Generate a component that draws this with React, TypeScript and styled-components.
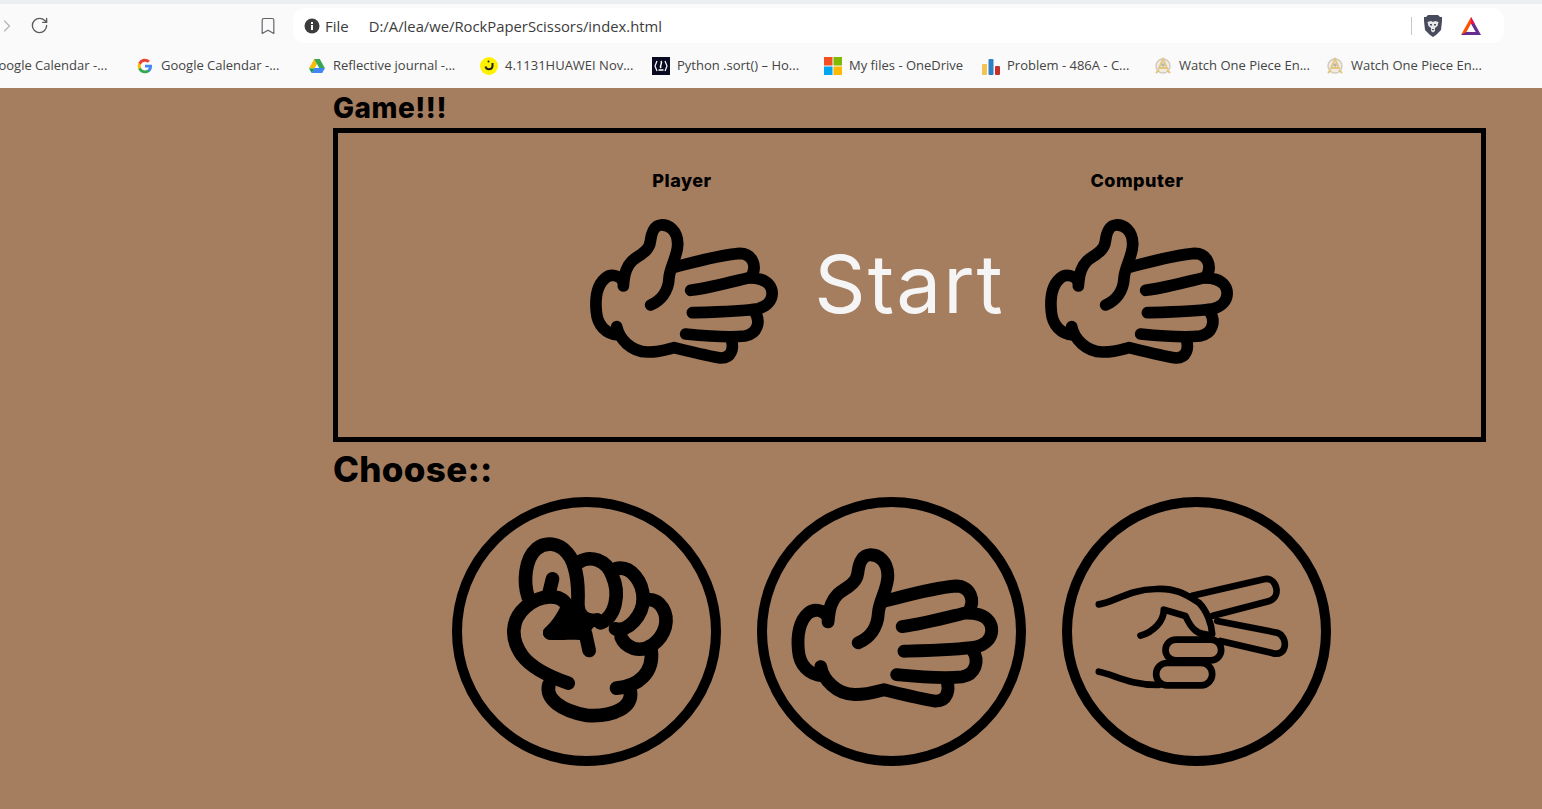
import styled, { createGlobalStyle } from 'styled-components'
import { Bookmark, ChevronRight, RotateCw } from 'lucide-react'

const GlobalStyle = createGlobalStyle`
  html, body {
    margin: 0;
    height: 100%;
    background: #a57d5f;
    overflow: hidden;
  }
`

function PaperHand() {
  return (
    <g fill="none" stroke="#000" strokeWidth="35" strokeLinecap="round" strokeLinejoin="round">
      <path d="M215 285C245 272 268 245 270 205C272 170 298 135 296 100C295 62 270 43 245 45C225 47 217 70 214 95C210 125 180 135 160 152C145 167 136 185 133 228" />
      <path d="M133 215C122 195 95 190 78 205C55 225 48 265 52 305C55 345 80 372 118 375" />
      <path d="M113 350C120 385 155 425 205 426C240 427 265 418 285 413C330 424 385 438 425 444C458 445 465 415 457 388" />
      <path d="M320 372C380 378 445 384 498 378C535 372 547 335 527 305" />
      <path d="M340 308C410 306 490 304 538 296C592 282 592 222 545 208C535 205 525 204 512 204" />
      <path d="M335 241C400 232 460 215 514 202C538 170 520 130 482 130C420 135 350 155 288 171" />
    </g>
  )
}

function RockHand() {
  return (
    <>
      <path fill="#000" d="M178 322L225 232L262 235L275 285L320 290L290 330Z" />
      <g fill="none" stroke="#000" strokeWidth="41" strokeLinecap="round" strokeLinejoin="round">
        <path d="M113 215C98 170 103 100 138 70C165 48 205 52 230 82C255 110 265 170 262 235C262 270 285 290 320 283" />
        <path d="M175 205L186 160" />
        <path d="M228 238C210 205 150 205 105 245C60 285 60 340 95 390C125 430 190 458 233 473" />
        <path d="M175 478C165 520 210 555 290 570C370 575 425 545 420 500" />
        <path d="M378 488C445 482 490 440 482 375" />
        <path d="M265 110C300 88 348 103 365 150C390 205 375 275 330 292" />
        <path d="M375 130C422 118 458 170 458 220C458 270 412 320 375 310" />
        <path d="M470 222C512 220 534 265 524 305C512 347 470 380 430 369C412 362 398 350 392 335" />
        <path d="M178 322C205 298 220 270 232 245" />
        <path d="M178 322C220 326 260 318 285 325L296 375" />
      </g>
    </>
  )
}

function ScissorsHand() {
  return (
    <g fill="none" stroke="#000" strokeWidth="20" strokeLinecap="round" strokeLinejoin="round">
      <path d="M40 130C85 125 130 85 210 84C270 80 300 100 340 125C365 150 378 190 380 218" />
      <path d="M320 104L535 55C572 45 590 105 552 120L382 164" />
      <path d="M395 180L575 215C610 228 605 290 560 276L405 240" />
      <path d="M165 224C205 212 235 180 235 146L300 165C318 205 335 222 378 222" />
      <rect x="240" y="236" width="167" height="62" rx="31" />
      <rect x="212" y="306" width="168" height="67" rx="33" />
      <path d="M40 332C85 340 130 372 220 372" />
    </g>
  )
}

const bookmarks = [
  { icon: 'google', label: 'Google Calendar -...' },
  { icon: 'google', label: 'Google Calendar -...' },
  { icon: 'drive', label: 'Reflective journal -...' },
  { icon: 'ring', label: '4.1131HUAWEI Nov...' },
  { icon: 'fcc', label: 'Python .sort() – Ho...' },
  { icon: 'ms', label: 'My files - OneDrive', narrow: true },
  { icon: 'bars', label: 'Problem - 486A - C...' },
  { icon: 'piece', label: 'Watch One Piece En...' },
  { icon: 'piece', label: 'Watch One Piece En...' },
]

function FavIcon({ kind }: { kind: string }) {
  if (kind === 'google')
    return (
      <svg width="18" height="18" viewBox="0 0 18 18">
        <path fill="#4285f4" d="M16 9.2c0-.5 0-1-.1-1.4H9v2.7h4a3.4 3.4 0 0 1-1.5 2.2v1.8h2.4C15.200 13.300 16 11.400 16 9.200z" />
        <path fill="#34a853" d="M9 16.300c2 0 3.600-.6 4.900-1.800l-2.400-1.800c-.7.4-1.500.7-2.500.7-1.900 0-3.500-1.300-4.100-3H2.400v1.900A7.300 7.300 0 0 0 9 16.300z" />
        <path fill="#fbbc05" d="M4.900 10.400a4.400 4.400 0 0 1 0-2.800V5.700H2.400a7.300 7.300 0 0 0 0 6.600z" />
        <path fill="#ea4335" d="M9 4.700c1.100 0 2 .4 2.800 1.100l2.100-2.100A7.300 7.300 0 0 0 2.400 5.700l2.500 1.900c.6-1.700 2.200-2.900 4.100-2.900z" />
      </svg>
    )
  if (kind === 'drive')
    return (
      <svg width="18" height="18" viewBox="0 0 18 18">
        <path fill="#fbbc04" d="M6.200 2h5.600l-5.400 9.500H1z" />
        <path fill="#34a853" d="M11.800 2l5.200 9.500h-5.500L6.200 2z" />
        <path fill="#4285f4" d="M6.400 11h10.600l-2.800 5H3.700z" />
        <path fill="#0f9d58" d="M1 11.500h5.400L3.700 16z" />
      </svg>
    )
  if (kind === 'ring')
    return (
      <svg width="18" height="18" viewBox="0 0 18 18">
        <circle cx="9" cy="9" r="9" fill="#fff200" />
        <path d="M5.500 9.500a3.600 3.600 0 0 0 7 0V6" fill="none" stroke="#222" strokeWidth="2" />
        <circle cx="8.500" cy="4.500" r="1" fill="#222" />
      </svg>
    )
  if (kind === 'fcc')
    return (
      <svg width="18" height="18" viewBox="0 0 18 18">
        <rect width="18" height="18" fill="#0a0a23" />
        <path d="M5 4L3 9l2 5M13 4l2 5-2 5" fill="none" stroke="#fff" strokeWidth="1.200" />
        <path d="M9 4c2 3-2 4 0 7M6.500 13h5" fill="none" stroke="#fff" strokeWidth="1.500" />
      </svg>
    )
  if (kind === 'ms')
    return (
      <svg width="18" height="18" viewBox="0 0 18 18">
        <rect width="8.500" height="8.500" fill="#f25022" />
        <rect x="9.500" width="8.500" height="8.500" fill="#7fba00" />
        <rect y="9.500" width="8.500" height="8.500" fill="#00a4ef" />
        <rect x="9.500" y="9.500" width="8.500" height="8.500" fill="#ffb900" />
      </svg>
    )
  if (kind === 'bars')
    return (
      <svg width="18" height="18" viewBox="0 0 18 18">
        <rect y="7" width="5" height="11" rx="1" fill="#f3c454" />
        <rect x="6.500" y="2" width="5" height="16" rx="1" fill="#2d80c4" />
        <rect x="13" y="9" width="5" height="9" rx="1" fill="#c8302c" />
      </svg>
    )
  return (
    <svg width="18" height="18" viewBox="0 0 18 18" fill="none">
      <circle cx="9" cy="9" r="7" fill="#f0ece2" stroke="#cfcabf" strokeWidth="1.400" />
      <path d="M9 2L5 11h8z" stroke="#e3c57c" strokeWidth="1.800" />
      <path d="M2 16l3-3M16 16l-3-3" stroke="#e3c57c" strokeWidth="2" />
      <circle cx="9" cy="8" r="1.800" fill="#b9b4aa" />
    </svg>
  )
}

export default function App() {
  return (
    <>
      <GlobalStyle />
      <Browser>
        <Toolbar>
          <NavGroup>
            <ChevronRight size={20} strokeWidth={1.4} color="#b4b4b4" />
            <RotateCw size={19} strokeWidth={1.7} color="#5a5a5a" />
            <Bookmark size={20} strokeWidth={1.4} color="#5f6368" />
          </NavGroup>
          <UrlBar>
            <svg width="16" height="16" viewBox="0 0 16 16">
              <circle cx="8" cy="8" r="7.500" fill="#3c3c3c" />
              <rect x="7" y="7" width="2" height="5" fill="#fff" />
              <rect x="7" y="4" width="2" height="2" fill="#fff" />
            </svg>
            <Scheme>File</Scheme>
            <Address>D:/A/lea/we/RockPaperScissors/index.html</Address>
            <Divider />
            <svg width="20" height="24" viewBox="0 0 20 24">
              <path fill="#474b5c" d="M5 1h10l2 2 2 0 0 4-1 9-5 5-3 2-3-2-5-5-1-9 0-4 2 0z" />
              <path fill="#e8e8ec" d="M4.500 8l3.500-1 2 1 2-1 3.500 1-1 4-2.500 2v3l-2 1.500L8 17v-3l-2.500-2z" />
              <path fill="#474b5c" d="M7 10h2v1.500H7zM11 10h2v1.500h-2zM8.500 15h3l-1.500 1.500z" />
            </svg>
            <BatIcon width="22" height="22" viewBox="0 0 22 22">
              <path fill="#662d91" d="M11 2l10 18H1l3-3h11.500L11 9z" />
              <path fill="#ff5000" d="M11 2L1 20l6-3.500L11 9z" />
              <path fill="#e0115f" d="M11 2l4 7.200-4-.2z" />
              <path fill="#fff" d="M11 9l4.500 8h-9z" />
            </BatIcon>
          </UrlBar>
        </Toolbar>
        <BookmarkBar>
          {bookmarks.map(({ icon, label, narrow }, index) => (
            <BookmarkItem key={index} $narrow={narrow}>
              <FavIcon kind={icon} />
              <span>{label}</span>
            </BookmarkItem>
          ))}
        </BookmarkBar>
      </Browser>
      <Page>
        <Heading>Game!!!</Heading>
        <GameBox>
          <Side>
            <PlayerName>Player</PlayerName>
            <ResultHand viewBox="-6 0 630 495">
              <PaperHand />
            </ResultHand>
          </Side>
          <StartLabel>Start</StartLabel>
          <Side>
            <PlayerName>Computer</PlayerName>
            <ResultHand viewBox="-6 0 630 495">
              <PaperHand />
            </ResultHand>
          </Side>
        </GameBox>
        <ChooseHeading>Choose::</ChooseHeading>
        <Choices>
          <Choice>
            <svg width="200" height="205" viewBox="-10.500 10.500 600 615">
              <RockHand />
            </svg>
          </Choice>
          <Choice>
            <svg width="231" height="182" viewBox="-9 8 630 495">
              <PaperHand />
            </svg>
          </Choice>
          <Choice>
            <svg width="220" height="140" viewBox="4.500 3 660 420">
              <ScissorsHand />
            </svg>
          </Choice>
        </Choices>
      </Page>
    </>
  )
}

const Browser = styled.header`
  height: 88px;
  box-sizing: border-box;
  padding-top: 4px;
  background: #eceef1;
  font-family: 'Open Sans', 'Liberation Sans', sans-serif;
  color: #3c3c3c;
  overflow: hidden;
`

const Toolbar = styled.div`
  display: flex;
  align-items: center;
  height: 40px;
  box-sizing: border-box;
  padding-top: 3px;
  background: #fafafa;
`

const NavGroup = styled.div`
  display: flex;
  align-items: center;
  width: 293px;
  box-sizing: border-box;
  padding-right: 12px;
  margin-left: -3px;
  gap: 13px;
  > svg:last-child {
    margin-left: auto;
  }
`

const UrlBar = styled.div`
  display: flex;
  align-items: center;
  width: 1211px;
  height: 35px;
  box-sizing: border-box;
  margin-left: 3px;
  padding: 0 22px 0 11px;
  border-radius: 12px;
  background: #fff;
`

const Scheme = styled.span`
  margin-left: 5px;
  font-size: 15px;
`

const Address = styled.span`
  margin-left: 20px;
  flex: 1;
  font-size: 14.8px;
`

const Divider = styled.span`
  width: 1px;
  height: 18px;
  margin-right: 11px;
  background: #c8c8c8;
`

const BatIcon = styled.svg`
  margin-left: 17px;
`

const BookmarkBar = styled.nav`
  display: flex;
  align-items: center;
  height: 44px;
  margin-left: -36px;
  background: #fafafa;
  width: 1600px;
`

const BookmarkItem = styled.div<{ $narrow?: boolean }>`
  display: flex;
  flex: 0 0 ${({ $narrow }) => ($narrow ? '158px' : '172px')};
  align-items: center;
  gap: 7px;
  font-size: 13px;
  line-height: 16px;
  white-space: nowrap;
  color: #444;
  > span {
    margin-top: -2px;
  }
`

const Page = styled.main`
  box-sizing: border-box;
  padding: 0 56px 0 333px;
  font-family: 'Inter', 'Liberation Sans', sans-serif;
  color: #000;
`

const Heading = styled.h2`
  margin: 0 0 5px;
  height: 35px;
  font-size: 28px;
  font-weight: 800;
  line-height: 40px;
  letter-spacing: 0.5px;
`

const GameBox = styled.section`
  display: grid;
  grid-template-columns: 210px 245px 210px;
  justify-content: center;
  align-items: end;
  box-sizing: border-box;
  height: 314px;
  padding-top: 35px;
  border: 5px solid #000;
`

const Side = styled.div`
  display: flex;
  flex-direction: column;
  align-items: center;
`

const PlayerName = styled.h4`
  margin: 0 0 16px;
  height: 26px;
  font-size: 18px;
  font-weight: 800;
  line-height: 26px;
  letter-spacing: 0.5px;
`

const ResultHand = styled.svg`
  width: 210px;
  height: 165px;
  margin-bottom: 62px;
`

const StartLabel = styled.div`
  align-self: start;
  margin-top: 71px;
  text-align: center;
  font-size: 80px;
  font-weight: 400;
  line-height: 90px;
  letter-spacing: 2px;
  color: #f5f5f5;
`

const ChooseHeading = styled.h2`
  margin: 7px 0 0;
  height: 48px;
  font-size: 35px;
  font-weight: 800;
  line-height: 40px;
  letter-spacing: 0.3px;
`

const Choices = styled.div`
  display: flex;
  gap: 36px;
  padding-left: 119px;
`

const Choice = styled.div`
  display: flex;
  align-items: center;
  justify-content: center;
  width: 269px;
  height: 269px;
  box-sizing: border-box;
  border: 10px solid #000;
  border-radius: 50%;
`
